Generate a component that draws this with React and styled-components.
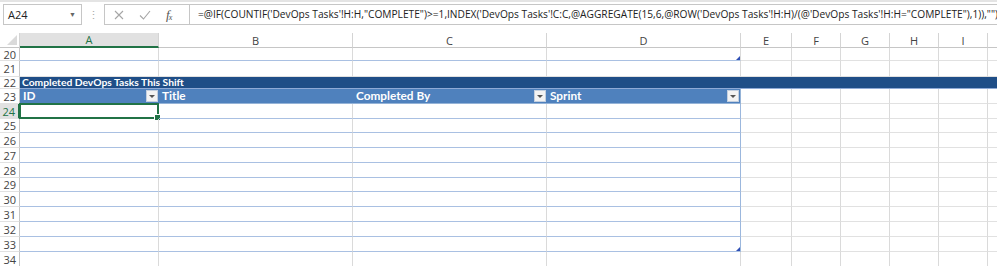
import React from 'react';
import styled, { createGlobalStyle } from 'styled-components';

const GlobalStyle = createGlobalStyle`
  html, body {
    margin: 0;
    padding: 0;
    background: #ffffff;
    overflow: hidden;
  }
  * { box-sizing: border-box; }
`;

// column widths in px, matching the sheet (J runs off the right edge)
const COLS = [
  { key: 'A', w: 139 },
  { key: 'B', w: 194 },
  { key: 'C', w: 194 },
  { key: 'D', w: 194 },
  { key: 'E', w: 51 },
  { key: 'F', w: 49 },
  { key: 'G', w: 49 },
  { key: 'H', w: 49 },
  { key: 'I', w: 49 },
  { key: 'J', w: 60, hidden: true },
];
const TEMPLATE = `20px ${COLS.map((c) => c.w + 'px').join(' ')}`;

const FORMULA =
  '=@IF(COUNTIF(\'DevOps Tasks\'!H:H,"COMPLETE")>=1,INDEX(\'DevOps Tasks\'!C:C,@AGGREGATE(15,6,@ROW(\'DevOps Tasks\'!H:H)/(@\'DevOps Tasks\'!H:H="COMPLETE"),1)),"")';

const Page = styled.div`
  width: 997px;
  height: 266px;
  overflow: hidden;
  font-family: 'Open Sans', 'Noto Sans', sans-serif;
  line-height: 1;
  background: #fff;
`;

/* ---------- formula bar ---------- */

const TopBar = styled.div`
  height: 33px;
  border-top: 2px solid #e4e4e4;
  padding: 2px 0 0 3px;
  display: flex;
  align-items: flex-start;
`;

const NameBox = styled.div`
  width: 79px;
  height: 21px;
  border: 1px solid #c6c6c6;
  display: flex;
  align-items: center;
  justify-content: space-between;
  padding: 0 5px 0 4px;
  font-size: 11px;
  color: #222;
`;

const Caret = styled.span`
  font-size: 7px;
  color: #666;
`;

const Dots = styled.div`
  width: 22px;
  height: 21px;
  display: flex;
  align-items: center;
  justify-content: center;
  color: #a8a8a8;
  font-size: 11px;
`;

const ButtonBox = styled.div`
  width: 86px;
  height: 21px;
  border: 1px solid #c6c6c6;
  display: flex;
  align-items: center;
  padding-left: 9px;
  gap: 15px;
`;

const Fx = styled.span`
  font-family: 'Liberation Serif', serif;
  font-style: italic;
  font-size: 13px;
  color: #555;
  letter-spacing: -1px;
  & sub {
    font-size: 8px;
    vertical-align: -1px;
  }
`;

const FormulaBox = styled.div`
  flex: 1;
  height: 21px;
  border: 1px solid #c6c6c6;
  border-left: none;
  border-right: none;
  display: flex;
  align-items: center;
  padding-left: 8px;
  font-size: 10.2px;
  color: #222;
  white-space: nowrap;
  overflow: hidden;
`;

/* ---------- sheet ---------- */

const Row = styled.div`
  display: grid;
  grid-template-columns: ${TEMPLATE};
  height: ${(p) => p.h}px;
`;

const ColHead = styled.div`
  display: flex;
  align-items: center;
  justify-content: center;
  font-size: 11px;
  color: ${(p) => (p.active ? '#217346' : '#444')};
  background: ${(p) => (p.active ? '#e1e1e1' : '#fff')};
  border-right: 1px solid #d4d4d4;
  border-bottom: ${(p) => (p.active ? '2px solid #217346' : '1px solid #c6c6c6')};
`;

const Corner = styled.div`
  position: relative;
  border-right: 1px solid #d4d4d4;
  border-bottom: 1px solid #c6c6c6;
  &::after {
    content: '';
    position: absolute;
    right: 2px;
    bottom: 2px;
    border-style: solid;
    border-width: 0 0 10px 10px;
    border-color: transparent transparent #dadada transparent;
  }
`;

const RowHead = styled.div`
  display: flex;
  align-items: center;
  justify-content: flex-end;
  padding-right: 3px;
  font-size: 11px;
  color: ${(p) => (p.active ? '#217346' : '#444')};
  background: ${(p) => (p.active ? '#e1e1e1' : '#fff')};
  border-right: ${(p) => (p.active ? '2px solid #217346' : '1px solid #c6c6c6')};
  border-bottom: 1px solid #e1e1e1;
`;

const Cell = styled.div`
  position: relative;
  border-right: 1px solid ${(p) => (p.blueRight ? '#9bb7dd' : '#dadada')};
  border-bottom: 1px solid ${(p) => (p.blueBottom ? '#a9c0e2' : '#e1e1e1')};
`;

const Band = styled.div`
  grid-column: 2 / -1;
  background: #1f4e87;
  color: #fff;
  font-family: 'Lato', 'Liberation Sans', sans-serif;
  font-weight: 700;
  font-size: 10.3px;
  display: flex;
  align-items: center;
  padding-left: 2px;
  border-bottom: 1px solid #8faad6;
`;

const HeadCell = styled.div`
  position: relative;
  background: #4f81bd;
  color: #fff;
  font-family: 'Lato', 'Liberation Sans', sans-serif;
  font-weight: 700;
  font-size: 11.8px;
  display: flex;
  align-items: center;
  padding-left: 3px;
  border-bottom: 1px solid #95b3d7;
  border-right: ${(p) => (p.last ? '1px solid #95b3d7' : 'none')};
`;

const FilterButton = styled.span`
  position: absolute;
  right: 1px;
  top: 1px;
  width: 12px;
  height: 12px;
  background: #f3f3f3;
  border: 1px solid #c3cfdf;
  display: flex;
  align-items: center;
  justify-content: center;
  &::after {
    content: '';
    border-style: solid;
    border-width: 3px 3px 0 3px;
    border-color: #555 transparent transparent transparent;
  }
`;

const Selection = styled.span`
  position: absolute;
  left: -1px;
  top: -1px;
  right: -1px;
  bottom: -1px;
  border: 2px solid #217346;
  &::after {
    content: '';
    position: absolute;
    right: -4px;
    bottom: -4px;
    width: 5px;
    height: 5px;
    background: #217346;
    border: 1px solid #fff;
  }
`;

const ResizeHandle = styled.span`
  position: absolute;
  right: 0;
  bottom: 0;
  border-style: solid;
  border-width: 0 0 4px 4px;
  border-color: transparent transparent #2f4fb5 transparent;
`;

const CrossIcon = () => (
  <svg width="10" height="10" viewBox="0 0 10 10">
    <path d="M1 1 L9 9 M9 1 L1 9" stroke="#a6a6a6" strokeWidth="1.1" fill="none" />
  </svg>
);

const CheckIcon = () => (
  <svg width="12" height="10" viewBox="0 0 12 10">
    <path d="M1 5.5 L4.5 9 L11 1" stroke="#a6a6a6" strokeWidth="1.1" fill="none" />
  </svg>
);

// plain grid row: every column just a gridline cell
const PlainRow = ({ num, h, blueUpTo, handle }) => (
  <Row h={h}>
    <RowHead>{num}</RowHead>
    {COLS.map((c, i) => (
      <Cell key={c.key} blueBottom={blueUpTo && i < 4}>
        {handle && c.key === 'D' && <ResizeHandle />}
      </Cell>
    ))}
  </Row>
);

const TableRow = ({ num, h, selected, handle }) => (
  <Row h={h}>
    <RowHead active={selected}>{num}</RowHead>
    {COLS.map((c, i) => (
      <Cell key={c.key} blueBottom={i < 4} blueRight={i === 3}>
        {selected && i === 0 && <Selection />}
        {handle && i === 3 && <ResizeHandle />}
      </Cell>
    ))}
  </Row>
);

const headers = [
  { label: 'ID', filter: true },
  { label: 'Title', filter: false },
  { label: 'Completed By', filter: true },
  { label: 'Sprint', filter: true },
];

const bodyRows = [24, 25, 26, 27, 28, 29, 30, 31, 32, 33];
const bodyHeights = [15, 14, 15, 15, 15, 14, 15, 15, 15, 15];

export default function App() {
  return (
    <Page>
      <GlobalStyle />
      <TopBar>
        <NameBox>
          A24
          <Caret>▼</Caret>
        </NameBox>
        <Dots>⋮</Dots>
        <ButtonBox>
          <CrossIcon />
          <CheckIcon />
          <Fx>
            f<sub>x</sub>
          </Fx>
        </ButtonBox>
        <FormulaBox>{FORMULA}</FormulaBox>
      </TopBar>

      <Row h={15}>
        <Corner />
        {COLS.map((c) => (
          <ColHead key={c.key} active={c.key === 'A'}>
            {c.hidden ? '' : c.key}
          </ColHead>
        ))}
      </Row>

      <PlainRow num={20} h={13} blueUpTo handle />
      <PlainRow num={21} h={16} />

      <Row h={12}>
        <RowHead>22</RowHead>
        <Band>Completed DevOps Tasks This Shift</Band>
      </Row>

      <Row h={15}>
        <RowHead>23</RowHead>
        {headers.map((hd, i) => (
          <HeadCell key={hd.label} last={i === 3}>
            {hd.label}
            {hd.filter && <FilterButton />}
          </HeadCell>
        ))}
        {COLS.slice(4).map((c) => (
          <Cell key={c.key} />
        ))}
      </Row>

      {bodyRows.map((n, i) => (
        <TableRow
          key={n}
          num={n}
          h={bodyHeights[i]}
          selected={n === 24}
          handle={n === 33}
        />
      ))}

      <PlainRow num={34} h={15} />
    </Page>
  );
}
